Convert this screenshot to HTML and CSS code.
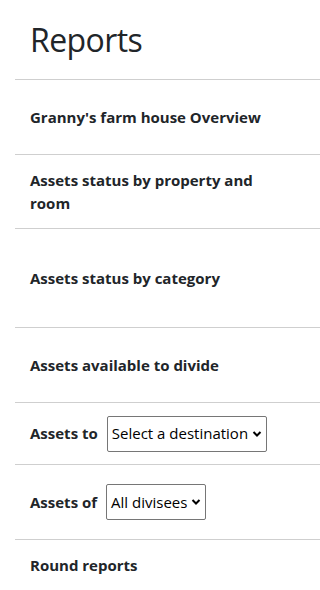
FILE: index.html
```html
<!DOCTYPE html>
<html>
<head>
<meta charset="utf-8">
<link rel="stylesheet" href="styles.css">
</head>
<body>
<div class="page">
  <h1 class="title">Reports</h1>
  <ul class="reports">
    <li class="row row-a">Granny's farm house Overview</li>
    <li class="row row-b">Assets status by property and room</li>
    <li class="row row-c">Assets status by category</li>
    <li class="row row-a">Assets available to divide</li>
    <li class="row row-d">
      <span class="label">Assets to</span>
      <span class="select">Select a destination<svg class="chev" viewBox="0 0 10 8" width="10" height="8"><path d="M1.5 2 L5 5.5 L8.5 2" fill="none" stroke="#000" stroke-width="2"/></svg></span>
    </li>
    <li class="row row-a">
      <span class="label">Assets of</span>
      <span class="select">All divisees<svg class="chev" viewBox="0 0 10 8" width="10" height="8"><path d="M1.5 2 L5 5.5 L8.5 2" fill="none" stroke="#000" stroke-width="2"/></svg></span>
    </li>
    <li class="row row-e">Round reports</li>
  </ul>
</div>
</body>
</html>
```
FILE: styles.css
```css
html, body {
  margin: 0;
  padding: 0;
  background: #fff;
}
body {
  font-family: "Open Sans", "Noto Sans", sans-serif;
  color: #212529;
  overflow: hidden;
}
.page {
  padding-left: 15px;
}
.title {
  margin: 0;
  height: 79px;
  box-sizing: border-box;
  padding: 17px 0 0 15px;
  font-size: 32px;
  font-weight: 400;
  line-height: 46px;
  letter-spacing: -0.6px;
}
.reports {
  list-style: none;
  margin: 0;
  padding: 0;
}
.row {
  border-top: 1px solid #cfcfcf;
  display: flex;
  align-items: center;
  gap: 9px;
  padding: 0 30px 0 15px;
  font-size: 15px;
  font-weight: 700;
  line-height: 23px;
  box-sizing: border-box;
}
.row-a { height: 75px; }
.row-b { height: 74px; }
.row-c { height: 99px; }
.row-d { height: 62px; }
.row-e { height: 54px; align-items: flex-start; padding-top: 14px; }
.label {
  white-space: nowrap;
}
.select {
  display: inline-flex;
  align-items: center;
  gap: 4px;
  height: 36px;
  box-sizing: border-box;
  padding: 0 4px 0 4px;
  border: 1px solid #767676;
  border-radius: 2px;
  font-size: 15px;
  font-weight: 400;
  color: #000;
  white-space: nowrap;
}
.chev {
  display: block;
}
```
